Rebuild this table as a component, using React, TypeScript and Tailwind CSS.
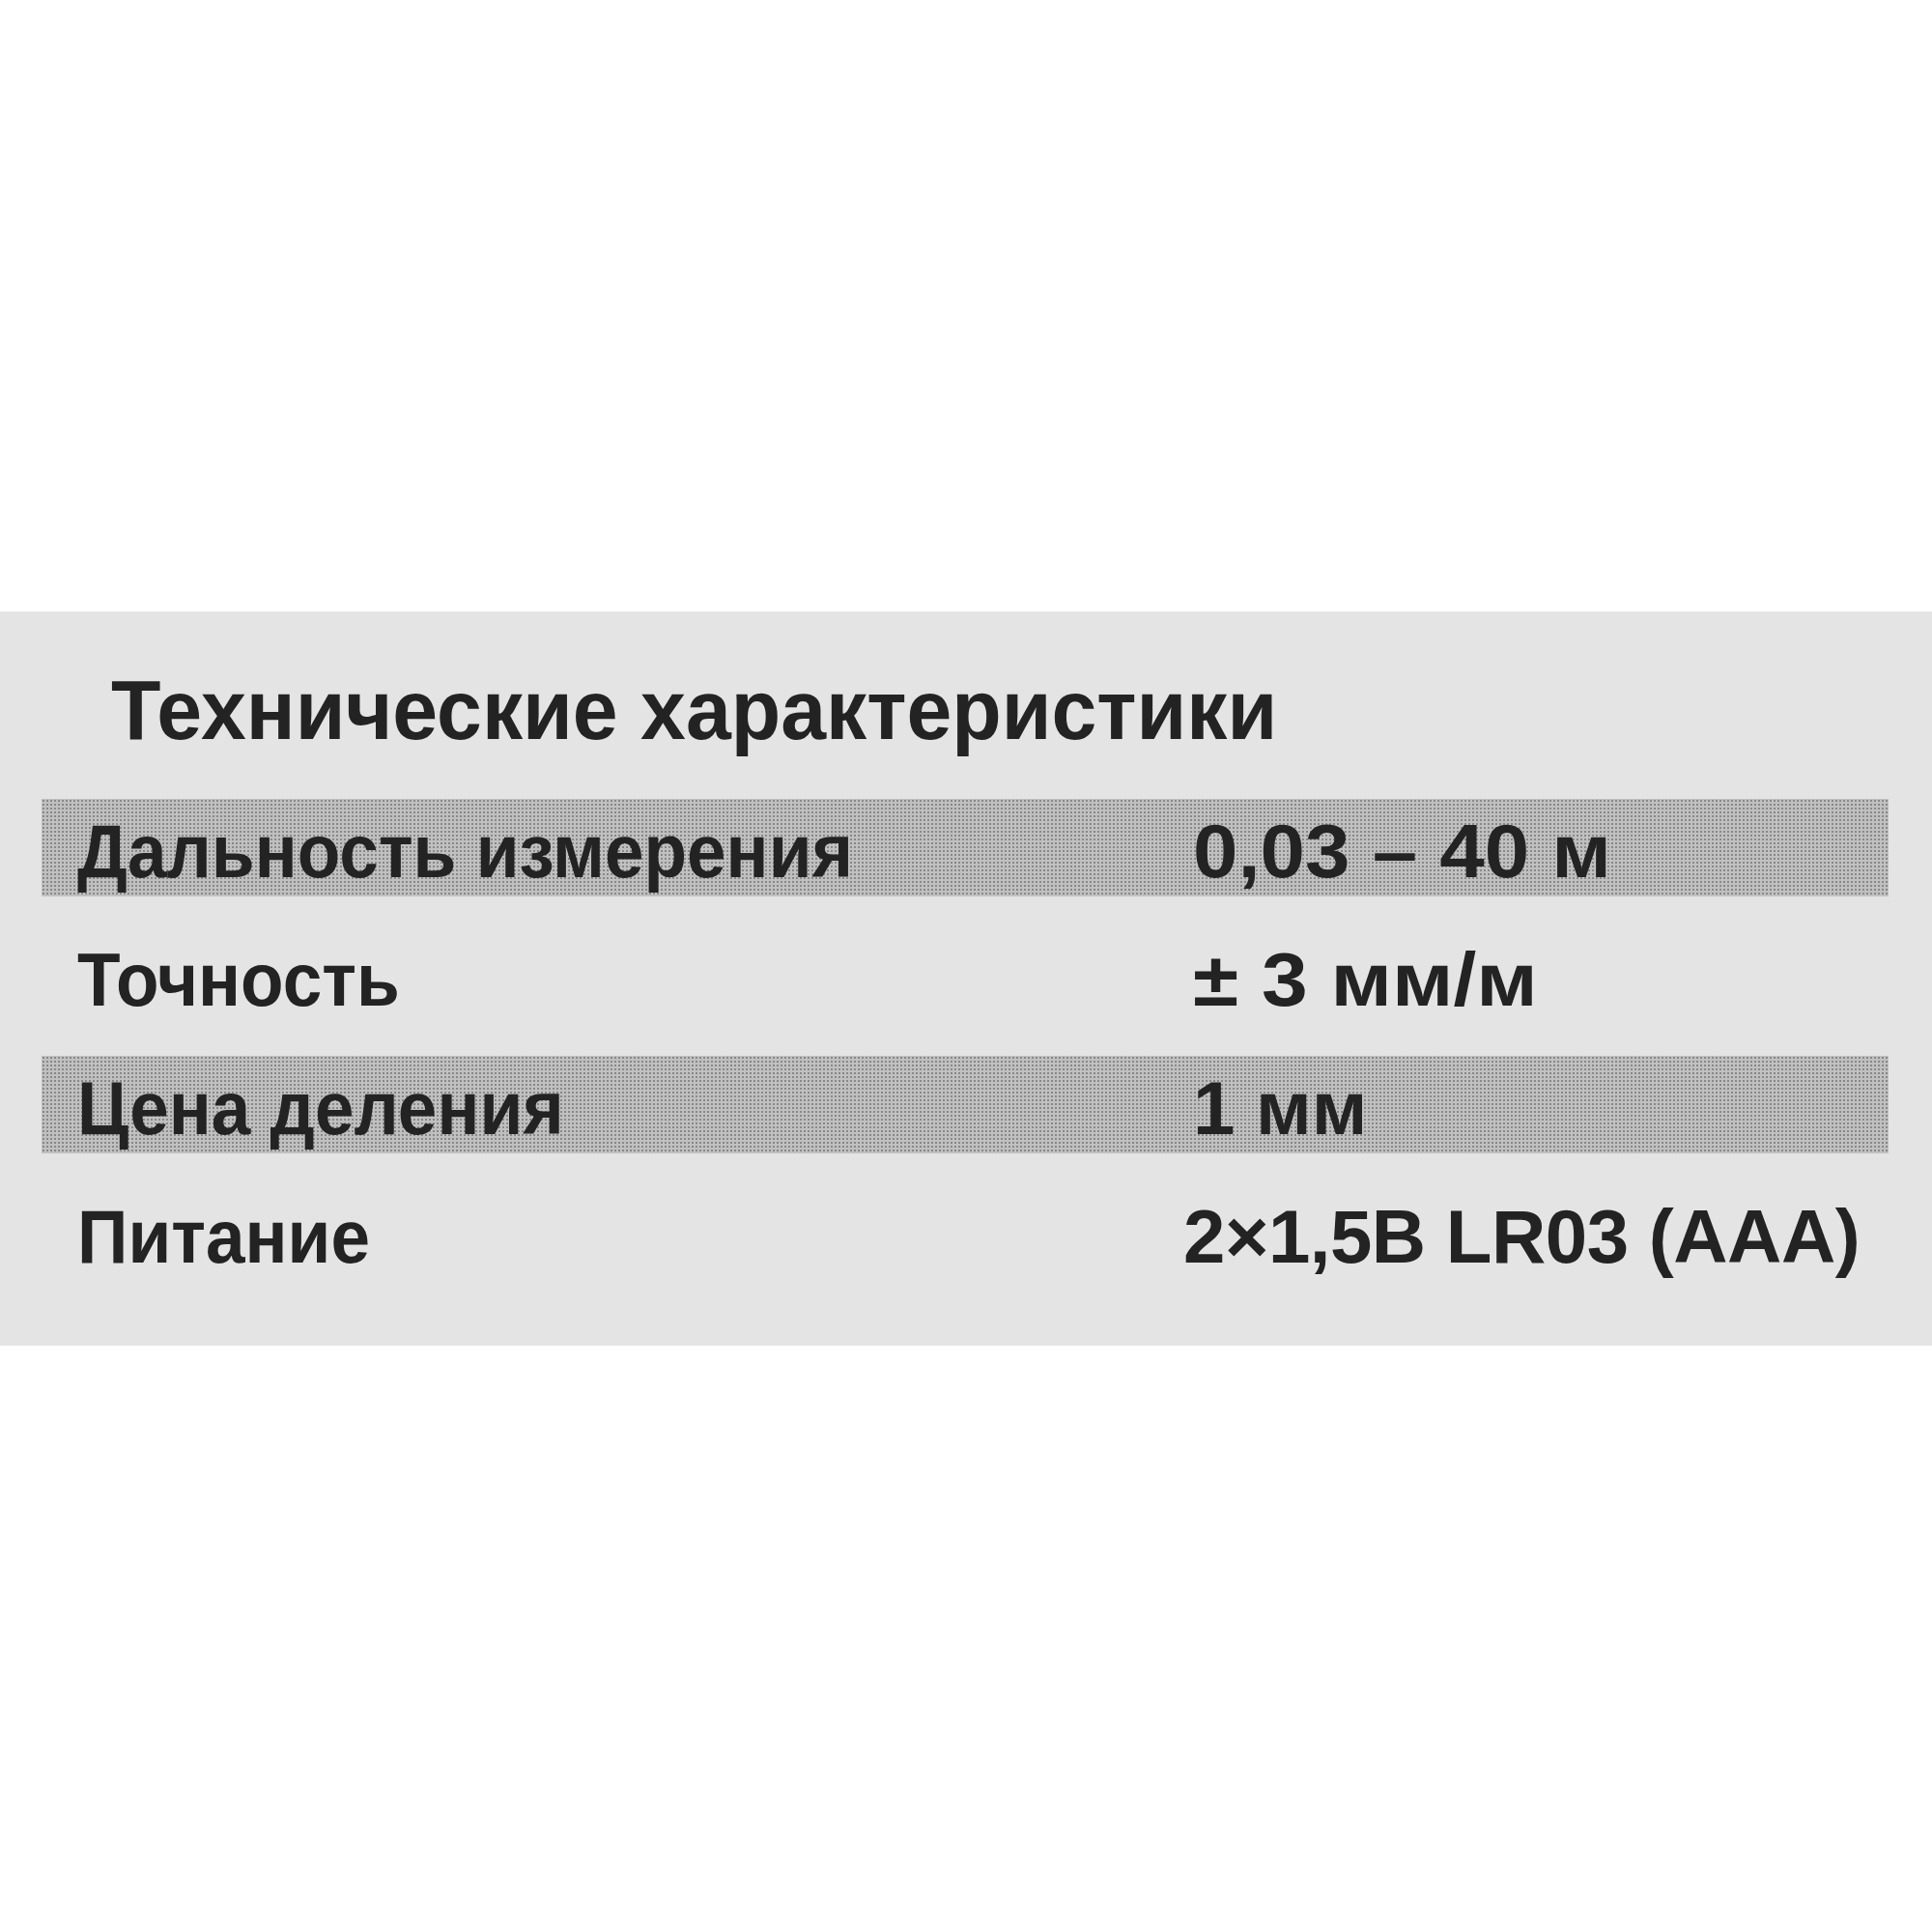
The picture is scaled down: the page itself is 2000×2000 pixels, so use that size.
const specs = [
  { label: "Дальность измерения", value: "0,03 – 40 м", shaded: true, valueCls: "origin-left scale-x-[1.07]" },
  { label: "Точность", value: "± 3 мм/м", shaded: false, valueCls: "origin-left scale-x-[1.1]" },
  { label: "Цена деления", value: "1 мм", shaded: true, valueCls: "" },
  { label: "Питание", value: "2×1,5В LR03 (AAA)", shaded: false, valueCls: "-ml-[10px] tracking-[-0.5px]" },
];

export default function App() {
  return (
    <div className="w-[2000px] h-[2000px] bg-white pt-[633px] font-['Liberation_Sans',Arial,sans-serif] text-[#232323]">
      <div className="h-[760px] bg-[#e4e4e4] pt-[58px] pl-[43px] pr-[45px]">
        <h1 className="ml-[72px] mb-[48px] text-[88px] leading-none font-bold whitespace-nowrap origin-left scale-x-[0.957]">
          Технические характеристики
        </h1>

        <div className="flex flex-col gap-[32px]">
          {specs.map((row) => (
            <div
              key={row.label}
              className={
                row.shaded
                  ? "h-[101px] pt-[6px] grid grid-cols-[1155px_1fr] items-center pl-[37px] bg-[#c0c0c0] bg-[radial-gradient(circle,#888888_0.8px,transparent_1.3px)] bg-[length:4px_4px]"
                  : "h-[101px] pt-[6px] grid grid-cols-[1155px_1fr] items-center pl-[37px]"
              }
            >
              <span className="text-[78px] leading-none font-bold whitespace-nowrap origin-left scale-x-[0.935]">
                {row.label}
              </span>
              <span className={"text-[78px] leading-none font-bold whitespace-nowrap " + row.valueCls}>
                {row.value}
              </span>
            </div>
          ))}
        </div>
      </div>
    </div>
  );
}
